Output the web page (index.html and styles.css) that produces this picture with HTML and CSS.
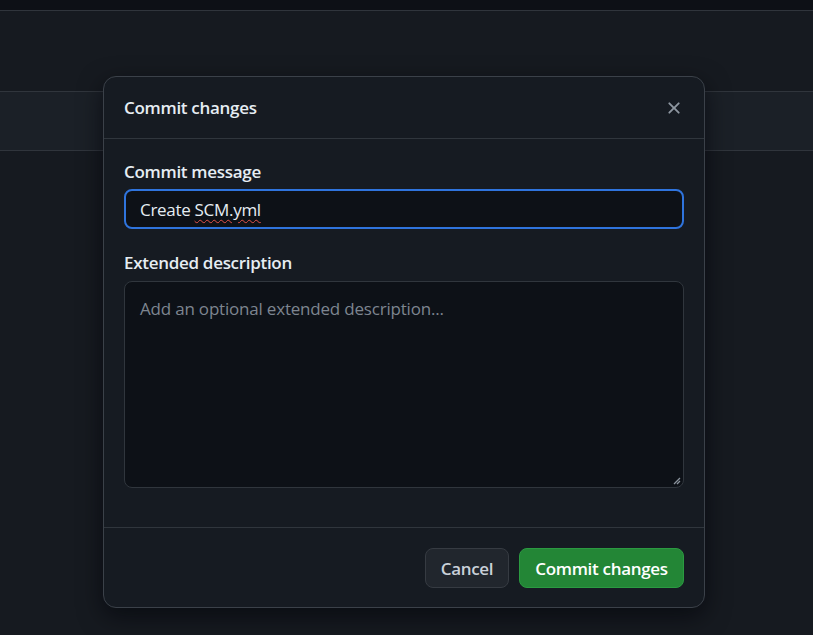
FILE: index.html
```html
<!DOCTYPE html>
<html lang="en">
<head>
<meta charset="utf-8">
<title>Commit changes</title>
<link rel="stylesheet" href="styles.css">
</head>
<body>
<div class="page">
  <div class="topbar"></div>
  <div class="gap"></div>
  <div class="band"></div>
  <div class="rest"></div>
</div>
<div class="overlay">
  <div class="dialog" role="dialog" aria-labelledby="dlg-title">
    <div class="dialog-header">
      <h1 id="dlg-title" class="dialog-title">Commit changes</h1>
      <button class="close-btn" aria-label="Close">
        <svg width="20" height="20" viewBox="0 0 16 16"><path d="M3.72 3.72a.75.75 0 0 1 1.06 0L8 6.94l3.22-3.22a.75.75 0 1 1 1.06 1.06L9.06 8l3.22 3.22a.75.75 0 1 1-1.06 1.06L8 9.06l-3.22 3.22a.75.75 0 0 1-1.06-1.06L6.94 8 3.72 4.78a.75.75 0 0 1 0-1.06Z" fill="currentColor"/></svg>
      </button>
    </div>
    <div class="dialog-body">
      <label class="field-label">Commit message</label>
      <div class="text-input"><span class="typed">Create <span class="misspelled">SCM.yml</span></span></div>
      <label class="field-label second">Extended description</label>
      <div class="textarea">
        <span class="placeholder">Add an optional extended description...</span>
        <svg class="grip" width="8" height="8" viewBox="0 0 8 8"><path d="M7 1 1 7M7 4 4 7" stroke="#8b949e" stroke-width="1.3" fill="none"/></svg>
      </div>
    </div>
    <div class="dialog-footer">
      <button class="btn btn-default">Cancel</button>
      <button class="btn btn-primary">Commit changes</button>
    </div>
  </div>
</div>
</body>
</html>
```
FILE: styles.css
```css
* { box-sizing: border-box; }
html, body { margin: 0; padding: 0; }
body {
  width: 813px;
  height: 635px;
  overflow: hidden;
  background: #161a20;
  font-family: "Open Sans", "Noto Sans", "Liberation Sans", sans-serif;
  position: relative;
}
.page { display: flex; flex-direction: column; height: 100%; }
.topbar { background: #0d1016; border-bottom: 1px solid #30353c; flex: none; height: 11px; }
.gap { height: 80px; background: #161a20; flex: none; }
.band { height: 60px; background: #1b2027; border-top: 1px solid #30353c; border-bottom: 1px solid #30353c; flex: none; }
.rest { flex: 1; background: #161a20; }

.overlay {
  position: absolute;
  inset: 0;
}
.dialog {
  position: absolute;
  left: 103px;
  top: 76px;
  width: 602px;
  height: 532px;
  background: #161b22;
  border: 1px solid #3b4149;
  border-radius: 13px;
  box-shadow: 0 8px 24px rgba(1, 4, 9, 0.6);
  display: flex;
  flex-direction: column;
}
.dialog-header {
  height: 62px;
  border-bottom: 1px solid #30363d;
  display: flex;
  align-items: center;
  justify-content: space-between;
  padding: 0 20px;
  flex: none;
}
.dialog-title {
  margin: 0;
  font-size: 17px;
  font-weight: 600;
  color: #e6edf3;
  letter-spacing: -0.3px;
}
.close-btn {
  background: none;
  border: 0;
  padding: 0;
  width: 20px;
  height: 20px;
  display: flex;
  align-items: center;
  justify-content: center;
  color: #8d96a0;
  margin-right: 0;
}
.dialog-body {
  padding: 21px 20px 0;
  display: flex;
  flex-direction: column;
  height: 389px;
  border-bottom: 1px solid #30363d;
  flex: none;
}
.field-label {
  font-size: 17px;
  font-weight: 600;
  color: #e6edf3;
  line-height: 24px;
  height: 24px;
  letter-spacing: -0.3px;
}
.field-label.second { margin-top: 22px; }
.text-input {
  margin-top: 5px;
  height: 40px;
  border: 2px solid #2f74dd;
  border-radius: 8px;
  background: #0d1117;
  display: flex;
  align-items: center;
  padding: 0 14px;
  font-size: 17px;
  color: #e6edf3;
  letter-spacing: -0.3px;
}
.misspelled {
  text-decoration: underline wavy #e5534b;
  text-decoration-thickness: 1px;
  text-underline-offset: 3px;
}
.textarea {
  margin-top: 6px;
  height: 207px;
  border: 1px solid #30363d;
  border-radius: 8px;
  background: #0d1117;
  padding: 15px 15px;
  position: relative;
  line-height: 24px;
}
.placeholder {
  font-size: 17px;
  color: #7d8590;
  letter-spacing: -0.2px;
}
.grip { position: absolute; right: 2px; bottom: 2px; }
.dialog-footer {
  flex: 1;
  display: flex;
  justify-content: flex-end;
  align-items: flex-start;
  gap: 10px;
  padding: 20px 20px 0;
}
.btn {
  height: 40px;
  border-radius: 8px;
  font-family: inherit;
  font-size: 17px;
  font-weight: 600;
  padding: 0;
  white-space: nowrap;
  letter-spacing: -0.3px;
  display: flex;
  align-items: center;
  justify-content: center;
}
.btn-default {
  background: #21262d;
  color: #c9d1d9;
  border: 1px solid #363b42;
  width: 84px;
}
.btn-primary {
  background: #238636;
  color: #ffffff;
  border: 1px solid #2b9a41;
  width: 165px;
}
```
